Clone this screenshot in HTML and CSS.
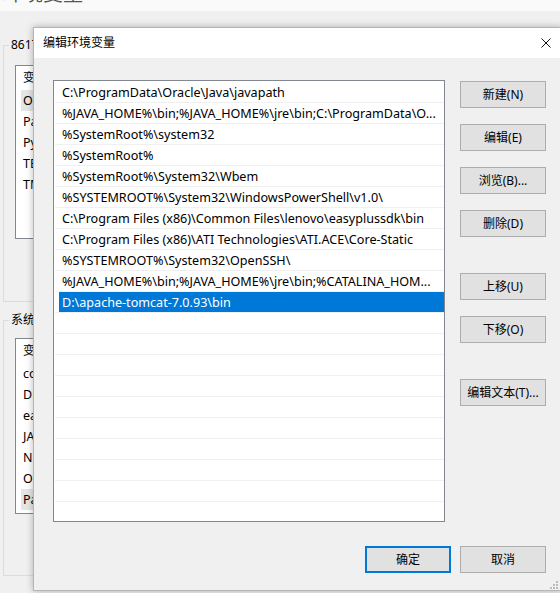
FILE: index.html
```html
<!DOCTYPE html>
<html lang="zh-CN">
<head>
<meta charset="utf-8">
<title>编辑环境变量</title>
<link rel="stylesheet" href="styles.css">
</head>
<body>
<div class="desktop">
  <div class="bg-title"><span class="bg-title-text">环境变量</span></div>
  <fieldset class="group group-user">
    <legend>86171 的用户变量(U)</legend>
    <div class="vlist vlist-user">
      <div class="vhead">变量</div>
      <div class="vrow sel">OneDrive</div>
      <div class="vrow">Path</div>
      <div class="vrow">PyCharm</div>
      <div class="vrow">TEMP</div>
      <div class="vrow">TMP</div>
    </div>
  </fieldset>
  <fieldset class="group group-sys">
    <legend>系统变量(S)</legend>
    <div class="vlist vlist-sys">
      <div class="vhead">变量</div>
      <div class="vrow">configsetroot</div>
      <div class="vrow">DriverData</div>
      <div class="vrow">easyplussdk</div>
      <div class="vrow">JAVA_HOME</div>
      <div class="vrow">NUMBER_OF_PROCESSORS</div>
      <div class="vrow">OS</div>
      <div class="vrow sel">Path</div>
    </div>
  </fieldset>
</div>

<div class="dialog">
  <div class="titlebar">
    <span class="title">编辑环境变量</span>
    <svg class="close" width="10" height="10" viewBox="0 0 10 10"><path d="M0.5 0.5 L9.5 9.5 M9.5 0.5 L0.5 9.5" stroke="#111" stroke-width="1" fill="none"/></svg>
  </div>
  <div class="body">
    <div class="main">
      <div class="plist">
        <div class="prow"><div class="cell">C:\ProgramData\Oracle\Java\javapath</div></div>
        <div class="prow"><div class="cell">%JAVA_HOME%\bin;%JAVA_HOME%\jre\bin;C:\ProgramData\O...</div></div>
        <div class="prow"><div class="cell">%SystemRoot%\system32</div></div>
        <div class="prow"><div class="cell">%SystemRoot%</div></div>
        <div class="prow"><div class="cell">%SystemRoot%\System32\Wbem</div></div>
        <div class="prow"><div class="cell">%SYSTEMROOT%\System32\WindowsPowerShell\v1.0\</div></div>
        <div class="prow"><div class="cell">C:\Program Files (x86)\Common Files\lenovo\easyplussdk\bin</div></div>
        <div class="prow"><div class="cell">C:\Program Files (x86)\ATI Technologies\ATI.ACE\Core-Static</div></div>
        <div class="prow"><div class="cell">%SYSTEMROOT%\System32\OpenSSH\</div></div>
        <div class="prow"><div class="cell">%JAVA_HOME%\bin;%JAVA_HOME%\jre\bin;%CATALINA_HOM...</div></div>
        <div class="prow sel"><div class="cell">D:\apache-tomcat-7.0.93\bin</div></div>
        <div class="prow"><div class="cell"></div></div>
        <div class="prow"><div class="cell"></div></div>
        <div class="prow"><div class="cell"></div></div>
        <div class="prow"><div class="cell"></div></div>
        <div class="prow"><div class="cell"></div></div>
        <div class="prow"><div class="cell"></div></div>
        <div class="prow"><div class="cell"></div></div>
        <div class="prow"><div class="cell"></div></div>
        <div class="prow"><div class="cell"></div></div>
        <div class="prow"><div class="cell"></div></div>
      </div>
      <div class="side">
        <button class="btn">新建(N)</button>
        <button class="btn">编辑(E)</button>
        <button class="btn">浏览(B)...</button>
        <button class="btn">删除(D)</button>
        <button class="btn sep">上移(U)</button>
        <button class="btn">下移(O)</button>
        <button class="btn sep">编辑文本(T)...</button>
      </div>
    </div>
    <div class="footer">
      <button class="btn default">确定</button>
      <button class="btn">取消</button>
    </div>
  </div>
  <svg class="grip" width="8" height="8" viewBox="0 0 8 8">
    <rect x="6" y="0" width="2" height="2" fill="#bcbcbc"/>
    <rect x="3" y="3" width="2" height="2" fill="#bcbcbc"/>
    <rect x="6" y="3" width="2" height="2" fill="#bcbcbc"/>
    <rect x="0" y="6" width="2" height="2" fill="#bcbcbc"/>
    <rect x="3" y="6" width="2" height="2" fill="#bcbcbc"/>
    <rect x="6" y="6" width="2" height="2" fill="#bcbcbc"/>
  </svg>
</div>
</body>
</html>
```

FILE: styles.css
```css
* { box-sizing: border-box; }
html, body { margin: 0; padding: 0; }
body {
  width: 560px;
  height: 593px;
  overflow: hidden;
  position: relative;
  background: #f0f0f0;
  color: #000;
  font-family: "Noto Sans", "Noto Sans CJK SC", sans-serif;
  font-size: 12px;
  line-height: 16px;
}

/* background window */
.bg-title {
  height: 11px;
  background: #fafafa;
  overflow: hidden;
}
.bg-title-text {
  display: block;
  margin-top: -16px;
  margin-left: 3px;
  font-size: 20px;
  line-height: 20px;
  color: #555;
}
.group {
  margin: 0 0 0 3px;
  width: 520px;
  min-width: 0;
  border: 1px solid #dcdcdc;
  border-right: none;
  padding: 12px 0 62px 0;
}
.group legend {
  margin-left: 5px;
  padding: 0 2px;
  line-height: 16px;
}
.group-user { margin-top: 26px; }
.group-sys { margin-top: 10px; padding-top: 10px; padding-bottom: 61px; }
.vlist {
  margin-left: 11px;
  width: 400px;
  border: 1px solid #828790;
  background: #fff;
}
.vlist-user { height: 174px; }
.vlist-sys { height: 176px; }
.vhead { height: 24px; line-height: 24px; padding-left: 7px; }
.vrow { height: 21px; line-height: 21px; margin-left: 5px; padding-left: 2px; font-size: 12.5px; }
.vrow.sel { background: #e5e5e5; }

/* dialog window */
.dialog {
  position: absolute;
  left: 33px;
  top: 27px;
  width: 529px;
  height: 564px;
  background: #f0f0f0;
  border: 1px solid #b5b5b5;
  box-shadow: 0 0 7px rgba(0, 0, 0, 0.28);
}
.titlebar {
  height: 30px;
  background: #fff;
  display: flex;
  align-items: center;
  padding-left: 9px;
}
.title { line-height: 16px; }
.close { margin-left: auto; margin-right: 10px; display: block; }
.body { padding: 22px 0 0 19px; }
.main { display: flex; align-items: flex-start; }
.plist {
  width: 392px;
  height: 442px;
  border: 1px solid #828790;
  background: #fff;
  padding-top: 1px;
  overflow: hidden;
}
.prow {
  height: 21px;
  margin-left: 1px;
  padding-left: 4px;
  border-bottom: 1px solid #f0f0f0;
}
.cell {
  height: 20px;
  line-height: 21px;
  padding-left: 3px;
  font-size: 12.6px;
  white-space: nowrap;
  overflow: hidden;
}
.prow.sel .cell { background: #0078d7; color: #fff; }

.side {
  display: flex;
  flex-direction: column;
  gap: 16px;
  margin-left: 15px;
  padding-top: 1px;
}
.btn {
  width: 86px;
  height: 27px;
  padding: 0;
  margin: 0;
  background: #e1e1e1;
  border: 1px solid #adadad;
  font: inherit;
  color: #000;
  line-height: 16px;
}
.side .sep { margin-top: 20px; }
.btn.default { border: 2px solid #0078d7; }
.footer {
  width: 493px;
  display: flex;
  justify-content: flex-end;
  gap: 9px;
  margin-top: 24px;
}
.grip { position: absolute; right: 3px; bottom: 1px; display: block; }
```
